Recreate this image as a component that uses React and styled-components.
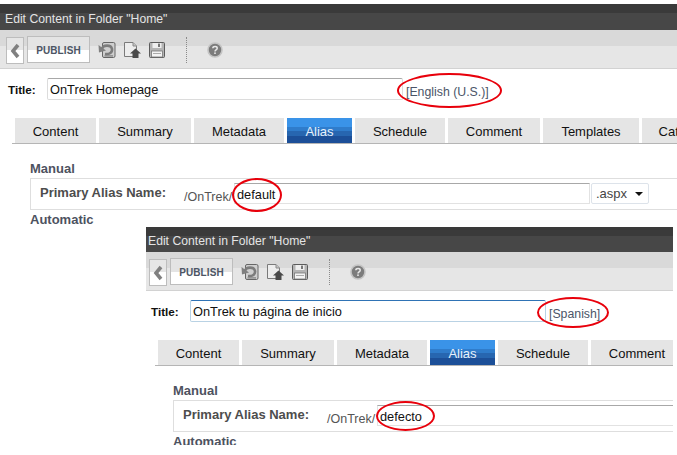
import React from "react";
import styled, { createGlobalStyle } from "styled-components";

const Global = createGlobalStyle`
  html, body { margin: 0; padding: 0; background: #fff; }
  body { font-family: "Liberation Sans", Arial, sans-serif; }
`;

const Page = styled.main`
  position: relative;
  width: 677px;
  height: 455px;
  overflow: hidden;
  background: #fff;
`;

const Window = styled.section`
  position: absolute;
  left: ${(p) => p.$x}px;
  top: ${(p) => p.$y}px;
  width: ${(p) => p.$w}px;
  height: ${(p) => p.$h}px;
  overflow: hidden;
  background: #fff;
`;

const Header = styled.header`
  height: ${(p) => p.$h}px;
  margin-top: ${(p) => 26 - p.$h}px;
  padding: 0 0 3px ${(p) => 5 + p.$shift}px;
  display: flex;
  align-items: flex-end;
  box-sizing: border-box;
  background: linear-gradient(#3a3a3a 0, #3a3a3a 9px, #474747 9px);
  color: #e4e4e4;
  font-size: 12.2px;
  line-height: 15px;
  white-space: nowrap;
`;

const Body = styled.div`
  margin-left: ${(p) => p.$shift}px;
  width: 700px;
`;

const Toolbar = styled.div`
  height: 39px;
  box-sizing: border-box;
  display: flex;
  align-items: flex-start;
  padding: 6px 0 0 6px;
  background: linear-gradient(#d9d9d9 0, #d9d9d9 16px, #e6e6e6 16px);
  border-bottom: 1px solid #d2d2d2;
`;

const BackButton = styled.button`
  width: 18px;
  height: 27px;
  margin: 1px 3px 0 0;
  padding: 0;
  box-sizing: border-box;
  border: 1px solid #bdbdbd;
  background: linear-gradient(#e6e6e6 0, #e6e6e6 12px, #fff 12px);
  display: flex;
  align-items: center;
  justify-content: center;
`;

const PublishButton = styled.button`
  width: 63px;
  height: 27px;
  padding: 1px 0 0;
  box-sizing: border-box;
  border: 1px solid #bdbdbd;
  background: linear-gradient(#e4e4e4 0, #e4e4e4 13px, #fff 13px);
  color: #4c5564;
  font-family: "Liberation Sans", Arial, sans-serif;
  font-size: 10px;
  font-weight: 700;
  letter-spacing: 0.1px;
`;

const ToolIcon = styled.svg`
  width: 18px;
  height: 18px;
  margin: 5px 0 0 ${(p) => p.$gap}px;
  flex: none;
`;

const Divider = styled.div`
  width: 0;
  height: 26px;
  margin: 1px 0 0 20px;
  border-left: 1px dotted #8a8a8a;
`;

const TitleRow = styled.div`
  display: flex;
  align-items: center;
  height: 22px;
  margin-top: 9px;
  padding-left: 8px;
`;

const TitleLabel = styled.label`
  width: 39px;
  font-size: 11.7px;
  font-weight: 700;
  color: #111;
`;

const TitleField = styled.div`
  width: 356px;
  height: 22px;
  box-sizing: border-box;
  padding-left: 2px;
  border: 1px solid ${(p) => (p.$focused ? "#b9d2e4" : "#dcdcdc")};
  border-top: 1px solid ${(p) => (p.$focused ? "#2f73b5" : "#a8a8a8")};
  border-radius: 2px;
  font-size: 12.8px;
  line-height: 21px;
  color: #111;
  white-space: nowrap;
`;

const Locale = styled.span`
  margin: 6px 0 0 3px;
  font-size: 12.3px;
  color: #4a5568;
  white-space: nowrap;
`;

const TabBar = styled.nav`
  display: flex;
  gap: 3px;
  margin: 18px 0 0 12px;
  padding-left: 3px;
  border-bottom: 1px solid #b5b5b5;
`;

const Tab = styled.div`
  width: ${(p) => p.$w}px;
  flex: none;
  height: 25px;
  text-align: center;
  font-size: 13px;
  line-height: 27px;
  color: ${(p) => (p.$active ? "#e8f1fb" : "#111")};
  background: ${(p) =>
    p.$active
      ? "linear-gradient(#3a93e8 0, #3a93e8 9px, #2f7ccb 9px, #2f7ccb 13px, #2766b0 13px, #2766b0 18px, #1c4f98 18px)"
      : "#e5e5e5"};
`;

const Content = styled.div`
  margin: 17px 0 0 30px;
  color: #4d4d4d;
`;

const SectionTitle = styled.h3`
  margin: 0;
  font-size: 13px;
  line-height: 16px;
  font-weight: 700;
  color: #4d5260;
`;

const AliasBox = styled.div`
  display: flex;
  align-items: flex-start;
  height: 32px;
  box-sizing: border-box;
  padding: 4px 0 0 9px;
  margin-top: 1px;
  border: 1px solid #dedede;
  border-right: none;
`;

const AliasLabel = styled.label`
  width: 144px;
  margin-top: 2px;
  font-size: 13px;
  line-height: 16px;
  font-weight: 700;
  color: #4d4d4d;
`;

const AliasPrefix = styled.span`
  width: 50px;
  margin-top: 7px;
  font-size: 12.5px;
  line-height: 15px;
  color: #555;
  white-space: nowrap;
`;

const AliasField = styled.div`
  width: 356px;
  height: 21px;
  box-sizing: border-box;
  padding-left: 2px;
  border: 1px solid #e2e2e2;
  border-top: 1px solid #a8a8a8;
  font-size: 12.8px;
  line-height: 21px;
  color: #111;
`;

const SuffixSelect = styled.div`
  display: flex;
  align-items: center;
  justify-content: space-between;
  width: 58px;
  height: 21px;
  margin-left: 1px;
  padding: 0 5px 0 4px;
  box-sizing: border-box;
  border: 1px solid #dde3ea;
  border-radius: 2px;
  font-size: 13px;
  color: #444;
`;

const Caret = styled.i`
  width: 0;
  height: 0;
  border-left: 4px solid transparent;
  border-right: 4px solid transparent;
  border-top: 4px solid #111;
`;

const AutoTitle = styled(SectionTitle)`
  margin-top: 2px;
`;

const RedRing = styled.span`
  position: absolute;
  left: ${(p) => p.$x}px;
  top: ${(p) => p.$y}px;
  width: ${(p) => p.$w}px;
  height: ${(p) => p.$h}px;
  box-sizing: border-box;
  border: 2px solid #e8000b;
  border-radius: 50%;
`;

const UndoIcon = ({ gap }) => (
  <ToolIcon $gap={gap} viewBox="0 0 18 18">
    <rect x="4.5" y="1.5" width="12.5" height="15" rx="1.5" fill="#cfcfcf" stroke="#666" />
    <path d="M0.5 4 L1 11.5 L8 9.5 Z" fill="#808080" />
    <path d="M4 8 C5 3.5 13 3.5 14 8 C14.5 11.5 11.5 13.5 7 13" fill="none" stroke="#7c7c7c" strokeWidth="2.6" />
    <rect x="6.5" y="14.2" width="8.5" height="1.4" fill="#8c8c8c" />
  </ToolIcon>
);

const UploadIcon = ({ gap }) => (
  <ToolIcon $gap={gap} viewBox="0 0 18 18">
    <path d="M1.5 1.5 H10 L13.5 5 V15.5 H1.5 Z" fill="#ededed" stroke="#7a7a7a" />
    <path d="M10 1.5 V5 H13.5" fill="#c4c4c4" stroke="#8a8a8a" />
    <path d="M12.5 7.5 L18 12.5 H15.5 V17 H9.5 V12.5 H7 Z" fill="#4a4a4a" />
  </ToolIcon>
);

const SaveIcon = ({ gap }) => (
  <ToolIcon $gap={gap} viewBox="0 0 18 18">
    <rect x="1.5" y="1.5" width="15" height="15" rx="1" fill="#b4b4b4" stroke="#5c5c5c" />
    <rect x="4.5" y="2" width="9" height="5" fill="#efefef" />
    <rect x="10" y="2.6" width="2" height="3.4" fill="#777" />
    <rect x="3.5" y="10" width="11" height="6" fill="#f3f3f3" stroke="#777" strokeWidth=".8" />
    <path d="M5 12.5H13" stroke="#aaa" />
  </ToolIcon>
);

const HelpIcon = ({ gap }) => (
  <ToolIcon $gap={gap} viewBox="0 0 18 18">
    <circle cx="9" cy="9" r="7" fill="#7c7c7c" stroke="#c4c4c4" strokeWidth="1.6" />
    <path d="M6.8 7.2 C7 5 11.2 5 11.2 7.2 C11.2 8.8 9 8.8 9 10.4" fill="none" stroke="#e8e8e8" strokeWidth="1.5" />
    <rect x="8.2" y="11.4" width="1.6" height="1.6" fill="#e8e8e8" />
  </ToolIcon>
);

const tabs = [
  ["Content", 81],
  ["Summary", 92],
  ["Metadata", 90],
  ["Alias", 65],
  ["Schedule", 90],
  ["Comment", 92],
  ["Templates", 96],
  ["Categories", 96],
];

function Editor({ x, y, w, h, headerH, shift, title, locale, alias, focused }) {
  return (
    <Window $x={x} $y={y} $w={w} $h={h}>
      <Header $h={headerH} $shift={shift}>
        Edit Content in Folder "Home"
      </Header>
      <Body $shift={shift}>
        <Toolbar>
          <BackButton aria-label="Back">
            <svg width="10" height="16" viewBox="0 0 10 16">
              <path d="M8 2 L3 8 L8 14" fill="none" stroke="#808080" strokeWidth="3.6" />
            </svg>
          </BackButton>
          <PublishButton>PUBLISH</PublishButton>
          <UndoIcon gap={8} />
          <UploadIcon gap={7} />
          <SaveIcon gap={7} />
          <Divider />
          <HelpIcon gap={19} />
        </Toolbar>
        <TitleRow>
          <TitleLabel>Title:</TitleLabel>
          <TitleField $focused={focused}>{title}</TitleField>
          <Locale>{locale}</Locale>
        </TitleRow>
        <TabBar>
          {tabs.map(([name, width]) => (
            <Tab key={name} $w={width} $active={name === "Alias"}>
              {name}
            </Tab>
          ))}
        </TabBar>
        <Content>
          <SectionTitle>Manual</SectionTitle>
          <AliasBox>
            <AliasLabel>Primary Alias Name:</AliasLabel>
            <AliasPrefix>/OnTrek/</AliasPrefix>
            <AliasField>{alias}</AliasField>
            <SuffixSelect>
              .aspx
              <Caret />
            </SuffixSelect>
          </AliasBox>
          <AutoTitle>Automatic</AutoTitle>
        </Content>
      </Body>
    </Window>
  );
}

export default function App() {
  return (
    <Page>
      <Global />
      <Editor
        x={0}
        y={4}
        w={677}
        h={451}
        headerH={26}
        shift={0}
        title="OnTrek Homepage"
        locale="[English (U.S.)]"
        alias="default"
      />
      <Editor
        x={146}
        y={226}
        w={527}
        h={219}
        headerH={25}
        shift={-3}
        title="OnTrek tu página de inicio"
        locale="[Spanish]"
        alias="defecto"
        focused
      />
      <RedRing $x={397} $y={73} $w={105} $h={35} />
      <RedRing $x={232} $y={178} $w={50} $h={34} />
      <RedRing $x={537} $y={297} $w={72} $h={31} />
      <RedRing $x={376} $y={401} $w={59} $h={30} />
    </Page>
  );
}
